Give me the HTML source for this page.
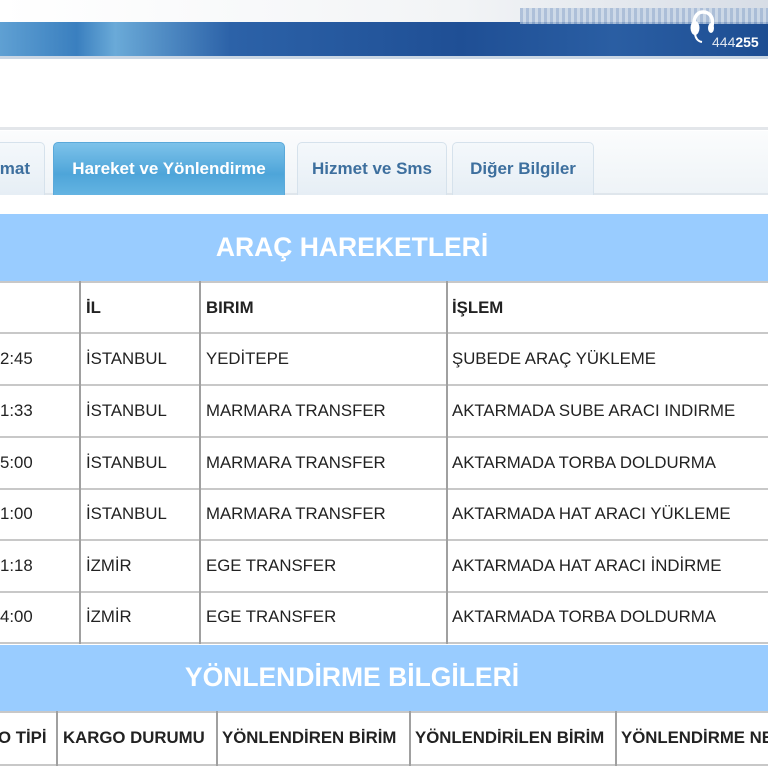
<!DOCTYPE html>
<html><head><meta charset="utf-8"><style>
*{margin:0;padding:0;box-sizing:border-box}
body{width:768px;height:768px;overflow:hidden;background:#fff;font-family:"Liberation Sans",Arial,sans-serif;position:relative}
.a{position:absolute}
.band{left:0;width:704px;color:#fff;font-weight:bold;font-size:26.5px;text-align:center}
.bg{left:0;width:768px;background:#99ccff}
.h{background:#c8c8c8;height:2px;left:0;width:768px}
.v{background:#a0a0a0;width:2px}
.t{font-size:16.8px;color:#222;white-space:nowrap}
.tab{top:142px;height:53px;border:1px solid #d6e2ec;border-bottom:none;border-radius:5px 5px 0 0;background:linear-gradient(#f4f8fb,#e6eef5);color:#3d6f9e;font-weight:bold;font-size:17px;text-align:center;line-height:52px}
</style></head><body>
<div class="a" style="left:0;top:0;width:768px;height:22px;background:linear-gradient(90deg,#fff,#f2f4f6 60%,#d7dde6)"></div>
<div class="a" style="left:0;top:22px;width:768px;height:36px;background:linear-gradient(90deg,#5fa0d3 0%,#3a7fbf 10%,#6aaad8 15%,#2c62a8 30%,#1f4f95 60%,#2a5ea3 80%,#1d4d92 100%)"></div>
<div class="a" style="left:520px;top:8px;width:248px;height:16px;background:repeating-linear-gradient(90deg,#9fb5d3 0 3px,#c7d5e6 3px 6px);opacity:.8"></div>
<div class="a" style="left:0;top:56px;width:768px;height:3px;background:#c9d6e4"></div>
<svg class="a" style="left:688px;top:8px" width="30" height="38" viewBox="0 0 30 38"><path d="M7 22 C4 12 8 4 15 4 C22 4 26 10 24 18" stroke="#fff" stroke-width="3.5" fill="none"/><ellipse cx="7" cy="20" rx="4.5" ry="7" fill="#fff"/><ellipse cx="23" cy="20" rx="3" ry="5" fill="#fff"/><path d="M7 26 Q8 33 14 34" stroke="#fff" stroke-width="2" fill="none"/></svg>
<div class="a" style="left:712px;top:34px;color:#fff;font-size:14px;"><span style="opacity:.85">444</span><b>255</b></div>
<div class="a" style="left:0;top:127px;width:768px;height:3px;background:#e3e6ea"></div>
<div class="a" style="left:0;top:131px;width:768px;height:64px;background:linear-gradient(#fbfcfd,#eef3f7)"></div>
<div class="a" style="left:0;top:193px;width:768px;height:2px;background:#dfe6ec"></div>
<div class="a tab" style="left:-10px;width:55px;text-align:right;padding-right:14px">mat</div>
<div class="a tab" style="left:53px;width:232px;background:linear-gradient(#7dc2ea,#4ea5d9 60%,#64b4e2);color:#fff;border-color:#5aa9da">Hareket ve Yönlendirme</div>
<div class="a tab" style="left:297px;width:150px">Hizmet ve Sms</div>
<div class="a tab" style="left:452px;width:142px">Diğer Bilgiler</div>

<div class="a bg" style="top:214px;height:67px"></div>
<div class="a band" style="top:214px;height:67px;line-height:66px">ARAÇ HAREKETLERİ</div>
<div class="a h" style="top:281px"></div>
<div class="a h" style="top:332px"></div>
<div class="a h" style="top:384px"></div>
<div class="a h" style="top:436px"></div>
<div class="a h" style="top:488px"></div>
<div class="a h" style="top:539px"></div>
<div class="a h" style="top:591px"></div>
<div class="a h" style="top:642px"></div>
<div class="a v" style="left:79px;top:281px;height:363px"></div>
<div class="a v" style="left:199px;top:281px;height:363px"></div>
<div class="a v" style="left:446px;top:281px;height:363px"></div>
<div class="a t" style="left:86px;top:298px;font-weight:bold">İL</div>
<div class="a t" style="left:206px;top:298px;font-weight:bold">BIRIM</div>
<div class="a t" style="left:452px;top:298px;font-weight:bold">İŞLEM</div>

<div class="a t" style="left:0;top:349px">2:45</div><div class="a t" style="left:86px;top:349px">İSTANBUL</div><div class="a t" style="left:206px;top:349px">YEDİTEPE</div><div class="a t" style="left:452px;top:349px">ŞUBEDE ARAÇ YÜKLEME</div>
<div class="a t" style="left:0;top:401px">1:33</div><div class="a t" style="left:86px;top:401px">İSTANBUL</div><div class="a t" style="left:206px;top:401px">MARMARA TRANSFER</div><div class="a t" style="left:452px;top:401px">AKTARMADA SUBE ARACI INDIRME</div>
<div class="a t" style="left:0;top:453px">5:00</div><div class="a t" style="left:86px;top:453px">İSTANBUL</div><div class="a t" style="left:206px;top:453px">MARMARA TRANSFER</div><div class="a t" style="left:452px;top:453px">AKTARMADA TORBA DOLDURMA</div>
<div class="a t" style="left:0;top:504px">1:00</div><div class="a t" style="left:86px;top:504px">İSTANBUL</div><div class="a t" style="left:206px;top:504px">MARMARA TRANSFER</div><div class="a t" style="left:452px;top:504px">AKTARMADA HAT ARACI YÜKLEME</div>
<div class="a t" style="left:0;top:556px">1:18</div><div class="a t" style="left:86px;top:556px">İZMİR</div><div class="a t" style="left:206px;top:556px">EGE TRANSFER</div><div class="a t" style="left:452px;top:556px">AKTARMADA HAT ARACI İNDİRME</div>
<div class="a t" style="left:0;top:607px">4:00</div><div class="a t" style="left:86px;top:607px">İZMİR</div><div class="a t" style="left:206px;top:607px">EGE TRANSFER</div><div class="a t" style="left:452px;top:607px">AKTARMADA TORBA DOLDURMA</div>

<div class="a bg" style="top:645px;height:66px"></div>
<div class="a band" style="top:645px;height:66px;line-height:64px">YÖNLENDİRME BİLGİLERİ</div>
<div class="a h" style="top:711px"></div>
<div class="a h" style="top:764px"></div>
<div class="a v" style="left:56px;top:711px;height:55px"></div>
<div class="a v" style="left:216px;top:711px;height:55px"></div>
<div class="a v" style="left:409px;top:711px;height:55px"></div>
<div class="a v" style="left:615px;top:711px;height:55px"></div>
<div class="a t" style="left:-2px;top:728px;font-weight:bold">O TİPİ</div>
<div class="a t" style="left:63px;top:728px;font-weight:bold">KARGO DURUMU</div>
<div class="a t" style="left:222px;top:728px;font-weight:bold">YÖNLENDİREN BİRİM</div>
<div class="a t" style="left:415px;top:728px;font-weight:bold">YÖNLENDİRİLEN BİRİM</div>
<div class="a t" style="left:621px;top:728px;font-weight:bold">YÖNLENDİRME NE</div>
</body></html>
